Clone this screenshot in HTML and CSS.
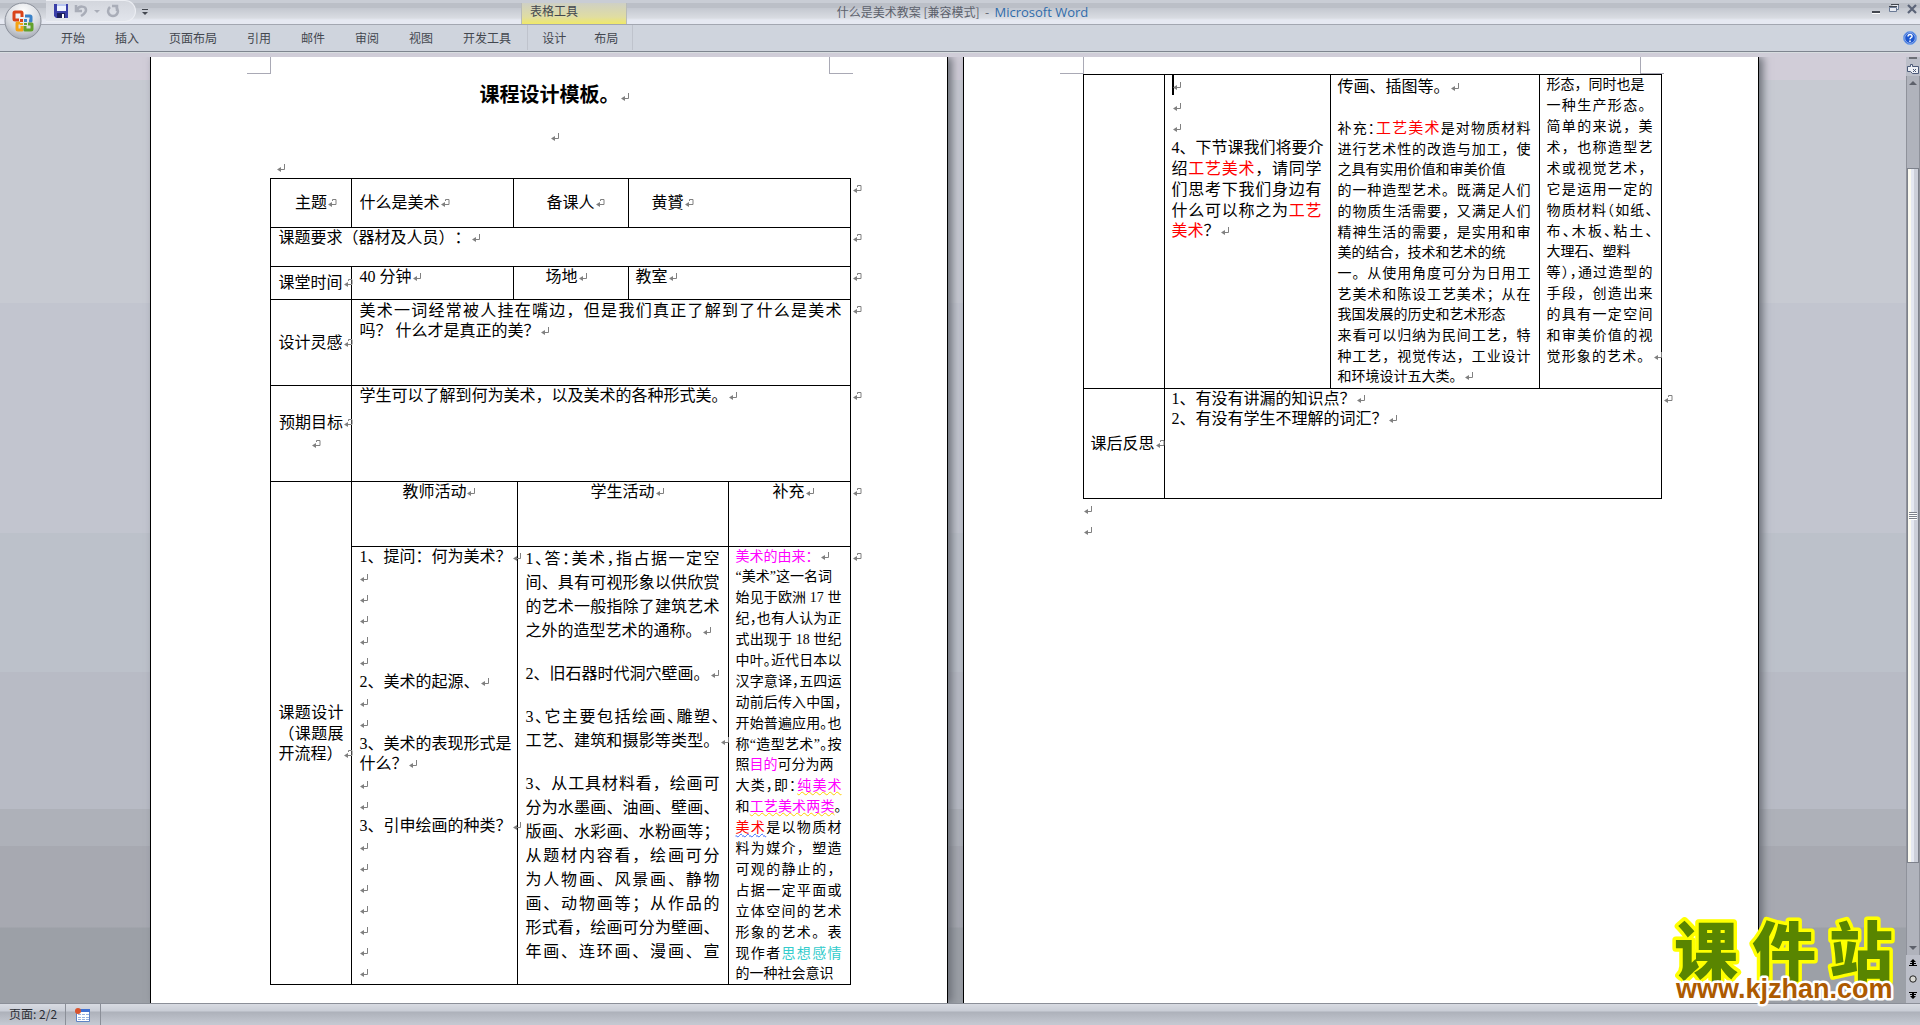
FILE: index.html
```html
<!DOCTYPE html>
<html lang="zh-CN">

<head>
    <meta charset="UTF-8">
    <meta name="viewport" content="width=device-width, initial-scale=1.0">
    <title>什么是美术教案 [兼容模式] - Microsoft Word</title>
    <link rel="stylesheet" href="styles.css">
</head>

<body>
    <header class="titlebar">
        <div class="quick">
            <div class="quick-box">
                <button class="icon-btn" aria-label="保存">
                    <svg width="14" height="14" viewBox="0 0 14 14">
                        <path d="M0 0h14v14H2l-2-2z" fill="#3a3fa8" />
                        <path d="M3 0h9v7H3z" fill="#eef3ff" />
                        <path d="M3 0h9v2H3z" fill="#b9c6f0" />
                        <path d="M3 9h8v5H3z" fill="#1c1f5c" />
                        <path d="M8 10h2v4H8z" fill="#fff" />
                    </svg>
                </button>
                <button class="icon-btn" aria-label="撤消">
                    <svg width="14" height="14" viewBox="0 0 14 14">
                        <path d="M2 1v6h6M3 6c2-5 9-4 9 0 0 3-2 4-5 6" fill="none" stroke="#a9adb8" stroke-width="2.500" />
                    </svg>
                </button>
                <span class="tiny-arrow pale"></span>
                <button class="icon-btn" aria-label="恢复">
                    <svg width="14" height="14" viewBox="0 0 14 14">
                        <path d="M4 3c-4 4-1 9 3 9s7-5 3-9M6 2h5v5" fill="none" stroke="#a9adb8" stroke-width="2.500" />
                    </svg>
                </button>
            </div>
            <button class="customize" aria-label="自定义快速访问工具栏"><span class="tiny-arrow lined"></span></button>
            <div class="context-label">表格工具</div>
        </div>
        <h1 class="caption">什么是美术教案 [兼容模式] &nbsp;- &nbsp;<span>Microsoft Word</span></h1>
        <div class="window-btns">
            <button class="icon-btn" aria-label="最小化">
                <svg width="10" height="10" viewBox="0 0 10 10"><path d="M1 7h8v2H1z" fill="#43474f" /><path d="M1 9h8v1H1z" fill="#fff" /></svg>
            </button>
            <button class="icon-btn" aria-label="还原">
                <svg width="10" height="10" viewBox="0 0 10 10"><path d="M2.500 .5h7v5h-2M.5 3.500h7v4h-7z" fill="#e8ebf2" stroke="#6b7a95" /><path d="M0 2.500h8M2 .5h8" stroke="#43474f" /></svg>
            </button>
            <button class="icon-btn" aria-label="关闭">
                <svg width="10" height="10" viewBox="0 0 10 10"><path d="M1 1l8 8M9 1L1 9" stroke="#5b6478" stroke-width="2.200" /></svg>
            </button>
        </div>
    </header>

    <nav class="ribbon">
        <button>开始</button>
        <button>插入</button>
        <button>页面布局</button>
        <button>引用</button>
        <button>邮件</button>
        <button>审阅</button>
        <button>视图</button>
        <button>开发工具</button>
        <div class="context-tabs">
            <button>设计</button>
            <button>布局</button>
        </div>
        <button class="help" aria-label="帮助">
            <svg width="14" height="14" viewBox="0 0 14 14">
                <circle cx="7" cy="7" r="6.500" fill="#1d57cf" stroke="#7ba6e8" />
                <circle cx="7" cy="7" r="5.300" fill="none" stroke="#dfeaff" stroke-width=".6" />
                <path d="M5 5.500c0-3 4.500-2.500 4 0-.3 1-2 1.200-2 2.800M7 9.500v1.500" fill="none" stroke="#fff" stroke-width="1.500" />
            </svg>
        </button>
    </nav>

    <button class="office" aria-label="Office 按钮">
        <svg width="38" height="38" viewBox="0 0 38 38">
            <defs>
                <radialGradient id="orb" cx=".5" cy=".25" r=".8">
                    <stop offset="0" stop-color="#fff" />
                    <stop offset=".6" stop-color="#d6d9df" />
                    <stop offset="1" stop-color="#9da2ac" />
                </radialGradient>
            </defs>
            <circle cx="19" cy="19" r="18" fill="url(#orb)" stroke="#8b909b" />
            <g fill="none" stroke-width="3" stroke-linejoin="round">
                <path d="M15 18h-4q-1 0-1-1v-6q0-1 1-1h6q1 0 1 1v4" stroke="#d9431a" />
                <path d="M21 14h5q1 0 1 1v4h-2" stroke="#3b82c9" />
                <path d="M16 21h-3v6q0 1 1 1h4v-4" stroke="#f5a314" />
                <path d="M21 24v4h6q1 0 1-1v-5h-4" stroke="#62a12c" />
            </g>
            <path d="M20 17h3v3h-3z" fill="#3b82c9" />
            <path d="M16 17h3v3h-3z" fill="#d9431a" />
            <path d="M16 21h3v2h-3z" fill="#f5a314" />
            <path d="M20 21h3v2h-3z" fill="#62a12c" />
        </svg>
    </button>

    <main class="workspace">
        <div class="pages">
            <article class="page">
                <div class="corners"><i class="corner-l"></i><i class="corner-r"></i></div>
                <div class="intro">
                    <h2 class="mark">课程设计模板。</h2>
                    <p class="spacer mark"></p>
                    <p class="before-table mark"></p>
                </div>
                <table>
                    <colgroup>
                        <col class="w81"><col class="w162"><col class="w4"><col class="w110"><col class="w100"><col class="w122"><col class="w14">
                    </colgroup>
                    <tr class="h49">
                        <td class="mid center"><p class="mark">主题</p></td>
                        <td class="mid"><p class="mark">什么是美术</p></td>
                        <td class="mid center" colspan="2"><p class="mark">备课人</p></td>
                        <td class="mid" colspan="2"><p class="indent-1 mark">黄贇</p></td>
                        <td class="end"><p class="mark cell"></p></td>
                    </tr>
                    <tr class="h39">
                        <td colspan="6"><p class="mark">课题要求（器材及人员）：</p></td>
                        <td class="end"><p class="mark cell"></p></td>
                    </tr>
                    <tr class="h33">
                        <td class="mid"><p class="mark">课堂时间</p></td>
                        <td><p class="mark">40 分钟</p></td>
                        <td colspan="2"><p class="indent-2 mark">场地</p></td>
                        <td colspan="2"><p class="mark">教室</p></td>
                        <td class="end"><p class="mark cell"></p></td>
                    </tr>
                    <tr class="h86">
                        <td class="mid"><p class="mark">设计灵感</p></td>
                        <td colspan="5">
                            <p class="fill">美术一词经常被人挂在嘴边，但是我们真正了解到了什么是美术</p>
                            <p class="mark">吗？ 什么才是真正的美？</p>
                        </td>
                        <td class="end"><p class="mark cell"></p></td>
                    </tr>
                    <tr class="h96">
                        <td class="mid center">
                            <p class="mark">预期目标</p>
                            <p class="blank mark"></p>
                        </td>
                        <td colspan="5"><p class="mark">学生可以了解到何为美术，以及美术的各种形式美。</p></td>
                        <td class="end"><p class="mark cell"></p></td>
                    </tr>
                    <tr class="h65">
                        <td class="mid" rowspan="2">
                            <p class="fill">课题设计</p>
                            <p class="fill">（课题展</p>
                            <p class="mark">开流程）</p>
                        </td>
                        <td class="center" colspan="2"><p class="mark">教师活动</p></td>
                        <td class="center" colspan="2"><p class="mark">学生活动</p></td>
                        <td class="center"><p class="mark">补充</p></td>
                        <td class="end"><p class="mark cell"></p></td>
                    </tr>
                    <tr class="h437">
                        <td colspan="2">
                            <p class="mark">1、提问：何为美术？</p>
                            <p class="blank mark"></p>
                            <p class="blank mark"></p>
                            <p class="blank mark"></p>
                            <p class="blank mark"></p>
                            <p class="blank mark"></p>
                            <p class="mark">2、美术的起源、</p>
                            <p class="blank mark"></p>
                            <p class="blank mark"></p>
                            <p>3、美术的表现形式是</p>
                            <p class="mark">什么？</p>
                            <p class="blank mark"></p>
                            <p class="blank mark"></p>
                            <p class="mark">3、引申绘画的种类？</p>
                            <p class="blank mark"></p>
                            <p class="blank mark"></p>
                            <p class="blank mark"></p>
                            <p class="blank mark"></p>
                            <p class="blank mark"></p>
                            <p class="blank mark"></p>
                            <p class="blank mark"></p>
                        </td>
                        <td class="answers" colspan="2">
                            <p class="fill half">1、答：美术，指占据一定空</p>
                            <p class="fill">间、具有可视形象以供欣赏</p>
                            <p class="fill">的艺术一般指除了建筑艺术</p>
                            <p class="mark">之外的造型艺术的通称。</p>
                            <p class="gap"></p>
                            <p class="mark">2、旧石器时代洞穴壁画。</p>
                            <p class="gap"></p>
                            <p class="fill half">3、它主要包括绘画、雕塑、</p>
                            <p class="fill mark">工艺、建筑和摄影等类型。</p>
                            <p class="gap"></p>
                            <p class="fill">3、从工具材料看，绘画可</p>
                            <p class="fill">分为水墨画、油画、壁画、</p>
                            <p class="fill">版画、水彩画、水粉画等；</p>
                            <p class="fill">从题材内容看，绘画可分</p>
                            <p class="fill">为人物画、风景画、静物</p>
                            <p class="fill">画、动物画等；从作品的</p>
                            <p class="fill">形式看，绘画可分为壁画、</p>
                            <p class="fill">年画、连环画、漫画、宣</p>
                        </td>
                        <td class="notes">
                            <p class="mark"><span class="magenta">美术的由来：</span></p>
                            <p>“美术”这一名词</p>
                            <p class="fill">始见于欧洲 17 世</p>
                            <p class="fill half">纪，也有人认为正</p>
                            <p class="fill">式出现于 18 世纪</p>
                            <p class="fill half">中叶。近代日本以</p>
                            <p class="fill half">汉字意译，五四运</p>
                            <p class="fill half">动前后传入中国，</p>
                            <p class="fill half">开始普遍应用。也</p>
                            <p class="fill half">称“造型艺术”。按</p>
                            <p>照<span class="magenta">目的</span>可分为两</p>
                            <p class="fill half">大类，即：<span class="magenta grammar">纯美术</span></p>
                            <p class="fill half">和<span class="magenta grammar">工艺美术两类</span>。</p>
                            <p class="fill"><span class="red format">美术</span>是以物质材</p>
                            <p class="fill">料为媒介，塑造</p>
                            <p class="fill">可观的静止的，</p>
                            <p class="fill">占据一定平面或</p>
                            <p class="fill">立体空间的艺术</p>
                            <p class="fill">形象的艺术。表</p>
                            <p class="fill">现作者<span class="teal">思想感情</span></p>
                            <p>的一种社会意识</p>
                        </td>
                        <td class="end"><p class="mark cell"></p></td>
                    </tr>
                </table>
            </article>

            <article class="page">
                <div class="corners"><i class="corner-l"></i><i class="corner-r"></i></div>
                <table>
                    <colgroup>
                        <col class="w81"><col class="w166"><col class="w209"><col class="w122"><col class="w14">
                    </colgroup>
                    <tr class="h314">
                        <td></td>
                        <td>
                            <p class="blank mark"><span class="caret"></span></p>
                            <p class="blank mark"></p>
                            <p class="blank mark"></p>
                            <p>4、下节课我们将要介</p>
                            <p class="fill">绍<span class="red">工艺美术</span>，请同学</p>
                            <p class="fill">们思考下我们身边有</p>
                            <p class="fill">什么可以称之为<span class="red">工艺</span></p>
                            <p class="mark"><span class="red">美术</span>？</p>
                        </td>
                        <td class="notes">
                            <p class="lead mark">传画、插图等。</p>
                            <p class="gap"></p>
                            <p class="fill half">补充：<span class="red big">工艺美术</span>是对物质材料</p>
                            <p class="fill">进行艺术性的改造与加工，使</p>
                            <p>之具有实用价值和审美价值</p>
                            <p class="fill">的一种造型艺术。既满足人们</p>
                            <p class="fill">的物质生活需要，又满足人们</p>
                            <p class="fill">精神生活的需要，是实用和审</p>
                            <p>美的结合，技术和艺术的统</p>
                            <p class="fill">一。从使用角度可分为日用工</p>
                            <p class="fill">艺美术和陈设工艺美术；从在</p>
                            <p>我国发展的历史和艺术形态</p>
                            <p class="fill">来看可以归纳为民间工艺，特</p>
                            <p class="fill">种工艺，视觉传达，工业设计</p>
                            <p class="mark">和环境设计五大类。</p>
                        </td>
                        <td class="notes">
                            <p>形态，同时也是</p>
                            <p class="fill">一种生产形态。</p>
                            <p class="fill">简单的来说，美</p>
                            <p class="fill">术，也称造型艺</p>
                            <p class="fill">术或视觉艺术，</p>
                            <p class="fill">它是运用一定的</p>
                            <p class="fill half">物质材料（如纸、</p>
                            <p class="fill half">布、木板、粘土、</p>
                            <p>大理石、塑料</p>
                            <p class="fill half">等），通过造型的</p>
                            <p class="fill">手段，创造出来</p>
                            <p class="fill">的具有一定空间</p>
                            <p class="fill">和审美价值的视</p>
                            <p class="fill mark">觉形象的艺术。</p>
                        </td>
                        <td class="end"></td>
                    </tr>
                    <tr class="h110">
                        <td class="mid"><p class="mark">课后反思</p></td>
                        <td colspan="3">
                            <p class="mark">1、有没有讲漏的知识点？</p>
                            <p class="mark">2、有没有学生不理解的词汇？</p>
                        </td>
                        <td class="end"><p class="mark cell"></p></td>
                    </tr>
                </table>
                <p class="blank mark"></p>
                <p class="blank mark"></p>
            </article>
        </div>

        <aside class="scroll">
            <div class="split"></div>
            <button class="ruler" aria-label="标尺">
                <svg width="12" height="12" viewBox="0 0 12 12">
                    <path d="M.5 3.500h3v-2h2v2h6v7h-6l-2-2h-3z" fill="#eef0f5" stroke="#4c5a78" />
                    <path d="M6 6l3 3M9 6L6 9" stroke="#4c5a78" />
                </svg>
            </button>
            <div class="track">
                <span class="arrow-up"></span>
                <div class="thumb"><span class="grip"></span></div>
                <span class="arrow-down"></span>
            </div>
            <button class="browse" aria-label="前一页">
                <svg width="8" height="8" viewBox="0 0 8 8"><path d="M4 0l3 3H5v1h2v1H5v1h3v1H0V6h3V5H1V4h2V3H1z" /></svg>
            </button>
            <button class="browse" aria-label="选择浏览对象">
                <svg width="8" height="8" viewBox="0 0 8 8"><circle cx="4" cy="4" r="3.200" fill="#d8d8d4" stroke="#222" /></svg>
            </button>
            <button class="browse" aria-label="下一页">
                <svg width="8" height="8" viewBox="0 0 8 8"><path d="M4 8l3-3H5V4h2V3H5V2h3V1H0v1h3v1H1v1h2v1H1z" /></svg>
            </button>
        </aside>
    </main>

    <footer class="status">
        <span class="page-no">页面: 2/2</span>
        <button class="macro" aria-label="录制宏">
            <svg width="16" height="14" viewBox="0 0 16 14">
                <path d="M1.500 1.500h13v12h-13z" fill="#fff" stroke="#5f83c4" />
                <path d="M2 1h13v3H2z" fill="#3f6fd0" />
                <path d="M3 6.500h3m1 0h3m1 0h3M3 9.500h3m1 0h3m1 0h3M3 11.500h3m1 0h3m1 0h3" stroke="#9ab4e0" />
                <circle cx="3" cy="3" r="3" fill="#d9532c" />
            </svg>
        </button>
    </footer>

    <svg class="watermark" width="236" height="110" viewBox="0 0 236 110">
        <g class="wm-name">
            <text x="6 84 161" y="74">课件站</text>
        </g>
        <text class="wm-url" x="8" y="97">www.kjzhan.com</text>
    </svg>
</body>

</html>
```
FILE: styles.css
```css
* {
    box-sizing: border-box;
}

body {
    margin: 0;
    height: 100vh;
    display: flex;
    flex-direction: column;
    overflow: hidden;
    background: #cfd4dd;
    font-family: "Noto Sans CJK SC", sans-serif;
    font-size: 12px;
    color: #43474f;
    text-spacing-trim: space-all;
}

p,
h1,
h2 {
    margin: 0;
    font-weight: normal;
}

button {
    border: 0;
    padding: 0;
    background: none;
    font: inherit;
    color: inherit;
}

svg {
    display: block;
}

/* title bar */
.titlebar {
    flex: none;
    height: 25px;
    display: grid;
    grid-template-columns: 1fr auto 1fr;
    background: linear-gradient(#c9cdd5 0 3px, #bbbfc7 3px 8px, #c4c8d0 8px, #d9dce2 18px, #e6e9f2 20px);
    border-bottom: 1px solid #a3a7b1;
}

.quick {
    display: flex;
    align-items: flex-start;
}

.quick-box {
    display: flex;
    align-items: center;
    gap: 6px;
    width: 90px;
    height: 22px;
    margin-left: 46px;
    padding-left: 8px;
    background: linear-gradient(#d3d6dd, #e2e5ec);
    border: 1px solid #eceef3;
    border-left: 0;
    border-radius: 0 11px 11px 0;
}

.tiny-arrow {
    border: 3px solid transparent;
    border-top-color: #43474f;
    border-bottom: 0;
}

.tiny-arrow.pale {
    border-top-color: #a9adb8;
}

.tiny-arrow.lined {
    display: block;
    position: relative;
}

.tiny-arrow.lined::before {
    content: "";
    position: absolute;
    left: -3px;
    top: -6px;
    width: 6px;
    height: 1px;
    background: #43474f;
}

.customize {
    height: 24px;
    padding: 3px 6px 0;
}

.context-label {
    width: 106px;
    height: 21px;
    margin: 3px 0 0 367px;
    padding-left: 8px;
    line-height: 15px;
    background: linear-gradient(#cfd0c4, #e0dda2 14px, #f0e968);
    border-left: 1px solid #b8bbb9;
    border-right: 1px solid #b8bbb9;
}

.caption {
    padding-left: 5px;
    font-size: 12px;
    line-height: 24px;
    color: #5c616c;
    white-space: nowrap;
}

.caption span {
    font-family: "Open Sans", sans-serif;
    font-size: 13px;
    color: #2f6cab;
}

.window-btns {
    display: flex;
    justify-content: flex-end;
    gap: 8px;
    padding: 3px 3px 0 0;
    height: 14px;
}

/* ribbon tabs */
.ribbon {
    flex: none;
    display: flex;
    align-items: center;
    height: 32px;
    padding: 0 3px 7px 46px;
    background: linear-gradient(#cfd4dd 0 26px, #7e858f 26px 27px, #d8dde0 27px 28px, #d0cdd8 28px);
}

.ribbon button {
    padding: 0 15px;
    line-height: 25px;
}

.context-tabs {
    display: flex;
    margin-left: 1px;
    border-left: 1px solid #bfc3cc;
    border-right: 1px solid #bfc3cc;
}

.context-tabs button {
    padding: 0 14px;
}

.ribbon .help {
    margin-left: auto;
    padding: 0;
}

.office {
    position: absolute;
    left: 4px;
    top: 2px;
}

/* document area */
.workspace {
    flex: 1;
    min-height: 0;
    display: flex;
    background: linear-gradient(#d1cdd8 0 23px, #c7cad2 23px 246px, #c2c5cf 246px 476px, #bcc1ca 476px 615px, #b8bbc5 615px 752px, #aeb1b9 752px 789px, #a7a9b1 789px 870px, #9ca0a7 871px);
}

.pages {
    flex: 1;
    display: flex;
    justify-content: center;
    gap: 15px;
    padding-left: 3px;
    overflow: hidden;
}

.page {
    flex: 0 0 796px;
    padding: 0 82px 0 119px;
    background: #fff;
    border: solid #000;
    border-width: 0 1px;
    box-shadow: 4px 0 8px #6c7078;
    font-family: "Liberation Serif", "Noto Sans CJK SC", serif;
    font-size: 16px;
    line-height: 20px;
    color: #000;
}

.corners {
    display: flex;
    justify-content: space-between;
    height: 17px;
    margin: 0 12px 0 -23px;
}

.corner-l,
.corner-r {
    width: 24px;
    border: solid #a9a9b5;
    border-width: 0 1px 1px 0;
}

.corner-r {
    border-width: 0 0 1px 1px;
}

/* paragraph marks */
.mark::after {
    content: "";
    display: inline-block;
    width: 9px;
    height: 9px;
    margin: 0 -10px 0 1px;
    background: url("data:image/svg+xml,%3Csvg xmlns='http://www.w3.org/2000/svg' viewBox='0 0 9 9'%3E%3Cpath d='M7.500 0v5.500H1' fill='none' stroke='%23808080'/%3E%3Cpath d='M4 3v5L0 5.500z' fill='%23808080'/%3E%3C/svg%3E");
}

td .mark.cell::after,
.mid .mark::after {
    background: url("data:image/svg+xml,%3Csvg xmlns='http://www.w3.org/2000/svg' viewBox='0 0 9 9'%3E%3Cpath d='M4.500 2V.5h3.500v5H1' fill='none' stroke='%23808080'/%3E%3Cpath d='M4 3v5L0 5.500z' fill='%23808080'/%3E%3C/svg%3E");
}

.intro {
    padding-right: 36px;
    text-align: center;
}

.intro h2 {
    font-size: 20px;
    font-weight: bold;
    line-height: 42px;
}

.spacer {
    line-height: 42px;
}

.before-table {
    padding-left: 6px;
    text-align: left;
}

.blank,
.fill {
    line-height: 21px;
}

.gap {
    height: 19px;
}

.fill {
    text-align: justify;
    text-align-last: justify;
}

/* half-width punctuation on tightly set lines */
.half {
    font-feature-settings: "halt";
}

.indent-1 {
    padding-left: 16px;
}

.indent-2 {
    padding-left: 24px;
}

/* lesson table */
table {
    width: 100%;
    table-layout: fixed;
    border-collapse: collapse;
}

td {
    padding: 0 8px 0 7px;
    border: 1px solid #000;
    vertical-align: top;
    white-space: nowrap;
}

td.mid {
    vertical-align: middle;
}

td.center {
    text-align: center;
}

td.end {
    padding: 0 0 0 1px;
    border: 0;
}

.answers p {
    line-height: 24px;
}

.notes {
    font-size: 14px;
}

.notes .lead {
    font-size: 16px;
    line-height: 24px;
}

.notes .big {
    font-size: 15px;
}

.w4 { width: 4px; }
.w14 { width: 14px; }
.w81 { width: 81px; }
.w100 { width: 100px; }
.w110 { width: 110px; }
.w122 { width: 122px; }
.w162 { width: 162px; }
.w166 { width: 166px; }
.w209 { width: 209px; }

.h33 { height: 33px; }
.h39 { height: 39px; }
.h49 { height: 49px; }
.h65 { height: 65px; }
.h86 { height: 86px; }
.h96 { height: 96px; }
.h110 { height: 110px; }
.h314 { height: 314px; }
.h437 { height: 437px; }

.magenta {
    color: #f0f;
}

.red {
    color: #f00;
}

.teal {
    color: #3cc;
}

.grammar {
    text-decoration: underline wavy #fc0 1px;
}

.format {
    text-decoration: underline wavy #36f 1px;
}

.caret {
    display: inline-block;
    width: 2px;
    height: 20px;
    margin-right: -2px;
    vertical-align: top;
    background: #000;
}

/* scroll bar */
.scroll {
    flex: none;
    display: flex;
    flex-direction: column;
    align-items: center;
    width: 14px;
    background: #bcbfc9;
}

.split {
    width: 8px;
    height: 2px;
    background: #6c6f76;
}

.ruler {
    height: 17px;
    padding-top: 2px;
}

.track {
    flex: 1;
    width: 14px;
    display: flex;
    flex-direction: column;
    align-items: center;
    justify-content: space-between;
    padding: 5px 0;
    background: #b0b3bc;
    border: 1px solid #8f929b;
    border-width: 0 1px;
}

.arrow-up,
.arrow-down {
    border: 4px solid transparent;
    border-top: 0;
    border-bottom-color: #5d616b;
}

.arrow-down {
    border: 4px solid transparent;
    border-bottom: 0;
    border-top-color: #5d616b;
}

.thumb {
    flex: 0 1 80%;
    width: 12px;
    display: flex;
    align-items: center;
    justify-content: center;
    border: 1px solid #7d818b;
    background: linear-gradient(90deg, #fbfaf0 0 3px, #e6e9f2 3px 6px, #cdd0da 6px);
}

.grip {
    width: 8px;
    height: 8px;
    background: repeating-linear-gradient(#7d818b 0 1px, #fff 1px 2px);
}

.browse {
    height: 16px;
}

/* status bar */
.status {
    flex: none;
    display: flex;
    align-items: stretch;
    height: 22px;
    border-top: 1px solid #8b8f98;
    background: linear-gradient(#d8dbe2, #c9cdd6 7px, #adb1ba 8px, #c4c8d1 20px);
    color: #2b2e35;
}

.page-no {
    padding: 0 8px 0 9px;
    line-height: 20px;
    border-right: 1px solid #8b8f98;
}

.macro {
    padding: 0 9px;
    border-right: 1px solid #8b8f98;
}

/* site watermark */
.watermark {
    position: absolute;
    right: 16px;
    bottom: 14px;
    overflow: visible;
}

.watermark text {
    paint-order: stroke;
    stroke-linejoin: round;
}

.wm-name text {
    font-family: "Noto Sans CJK SC", sans-serif;
    font-size: 64px;
    font-weight: 900;
    fill: #598500;
    stroke: #ff0;
    stroke-width: 7px;
}

.wm-url {
    font-family: "Liberation Sans", sans-serif;
    font-size: 27px;
    font-weight: bold;
    fill: #ad5a00;
    stroke: #fff;
    stroke-width: 5px;
}
```
